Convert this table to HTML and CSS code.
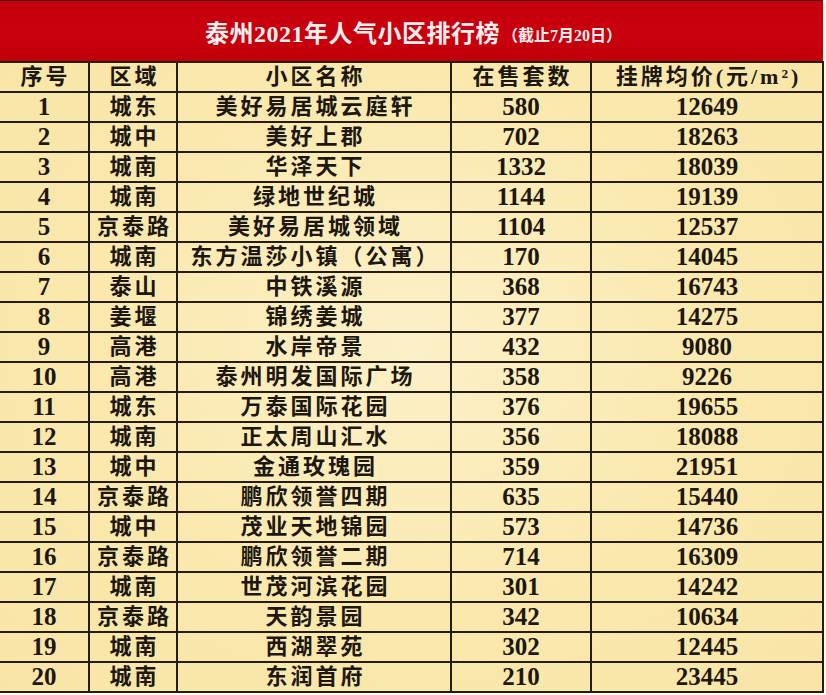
FILE: index.html
```html
<!DOCTYPE html>
<html lang="zh">
<head>
<meta charset="utf-8">
<title>泰州2021年人气小区排行榜</title>
<link rel="stylesheet" href="styles.css">
</head>
<body>
<div class="sheet">
  <div class="title">
    <span class="title-main">泰州2021年人气小区排行榜</span><span class="title-sub">（截止7月20日）</span>
  </div>
  <table class="rank">
    <colgroup>
      <col class="c1"><col class="c2"><col class="c3"><col class="c4"><col class="c5">
    </colgroup>
    <thead>
      <tr><th class="zh">序号</th><th class="zh">区域</th><th class="zh">小区名称</th><th class="zh">在售套数</th><th class="zh">挂牌均价(元/m²)</th></tr>
    </thead>
    <tbody>
      <tr><td>1</td><td class="zh">城东</td><td class="zh">美好易居城云庭轩</td><td>580</td><td>12649</td></tr>
      <tr><td>2</td><td class="zh">城中</td><td class="zh">美好上郡</td><td>702</td><td>18263</td></tr>
      <tr><td>3</td><td class="zh">城南</td><td class="zh">华泽天下</td><td>1332</td><td>18039</td></tr>
      <tr><td>4</td><td class="zh">城南</td><td class="zh">绿地世纪城</td><td>1144</td><td>19139</td></tr>
      <tr><td>5</td><td class="zh">京泰路</td><td class="zh">美好易居城领域</td><td>1104</td><td>12537</td></tr>
      <tr><td>6</td><td class="zh">城南</td><td class="zh">东方温莎小镇（公寓）</td><td>170</td><td>14045</td></tr>
      <tr><td>7</td><td class="zh">泰山</td><td class="zh">中铁溪源</td><td>368</td><td>16743</td></tr>
      <tr><td>8</td><td class="zh">姜堰</td><td class="zh">锦绣姜城</td><td>377</td><td>14275</td></tr>
      <tr><td>9</td><td class="zh">高港</td><td class="zh">水岸帝景</td><td>432</td><td>9080</td></tr>
      <tr><td>10</td><td class="zh">高港</td><td class="zh">泰州明发国际广场</td><td>358</td><td>9226</td></tr>
      <tr><td>11</td><td class="zh">城东</td><td class="zh">万泰国际花园</td><td>376</td><td>19655</td></tr>
      <tr><td>12</td><td class="zh">城南</td><td class="zh">正太周山汇水</td><td>356</td><td>18088</td></tr>
      <tr><td>13</td><td class="zh">城中</td><td class="zh">金通玫瑰园</td><td>359</td><td>21951</td></tr>
      <tr><td>14</td><td class="zh">京泰路</td><td class="zh">鹏欣领誉四期</td><td>635</td><td>15440</td></tr>
      <tr><td>15</td><td class="zh">城中</td><td class="zh">茂业天地锦园</td><td>573</td><td>14736</td></tr>
      <tr><td>16</td><td class="zh">京泰路</td><td class="zh">鹏欣领誉二期</td><td>714</td><td>16309</td></tr>
      <tr><td>17</td><td class="zh">城南</td><td class="zh">世茂河滨花园</td><td>301</td><td>14242</td></tr>
      <tr><td>18</td><td class="zh">京泰路</td><td class="zh">天韵景园</td><td>342</td><td>10634</td></tr>
      <tr><td>19</td><td class="zh">城南</td><td class="zh">西湖翠苑</td><td>302</td><td>12445</td></tr>
      <tr><td>20</td><td class="zh">城南</td><td class="zh">东润首府</td><td>210</td><td>23445</td></tr>
    </tbody>
  </table>
</div>
</body>
</html>
```

FILE: styles.css
```css
html, body {
  margin: 0;
  padding: 0;
  background: #fdfbf4;
}

.sheet {
  width: 823px;
  font-family: "Liberation Serif", "Noto Sans CJK SC", serif;
  color: #1c1710;
}

.title {
  height: 61px;
  box-sizing: border-box;
  border-top: 1px solid #4a0a0a;
  background: linear-gradient(180deg, #c6000c 0%, #c9000d 60%, #c00009 100%);
  display: flex;
  align-items: center;
  justify-content: center;
  color: #fbeeee;
  padding-left: 4px;
}

.title-main {
  font-size: 24px;
  font-weight: 700;
  letter-spacing: 0.5px;
}

.title-sub {
  font-size: 16px;
  font-weight: 700;
  margin-left: 2px;
  margin-top: 6px;
}

.rank {
  width: 823px;
  table-layout: fixed;
  border-collapse: collapse;
  background: radial-gradient(ellipse at 50% 45%, #fcf0c8 0%, #fae8ad 55%, #f8e5a6 100%);
}

.c1 { width: 89px; }
.c2 { width: 88px; }
.c3 { width: 274px; }
.c4 { width: 140px; }
.c5 { width: 232px; }

.rank th,
.rank td {
  height: 28px;
  padding: 0;
  border: 2px solid #231d14;
  text-align: center;
  vertical-align: middle;
  font-size: 25px;
  font-weight: 700;
  line-height: 28px;
  white-space: nowrap;
  overflow: hidden;
}

.rank thead th {
  border-top: 2px solid #231d14;
}

.rank tr > :first-child {
  border-left: none;
}

.rank .zh {
  font-size: 22px;
  font-weight: 600;
  letter-spacing: 3px;
  padding-left: 3px;
}

.rank th.zh {
  font-size: 22px;
}
```
